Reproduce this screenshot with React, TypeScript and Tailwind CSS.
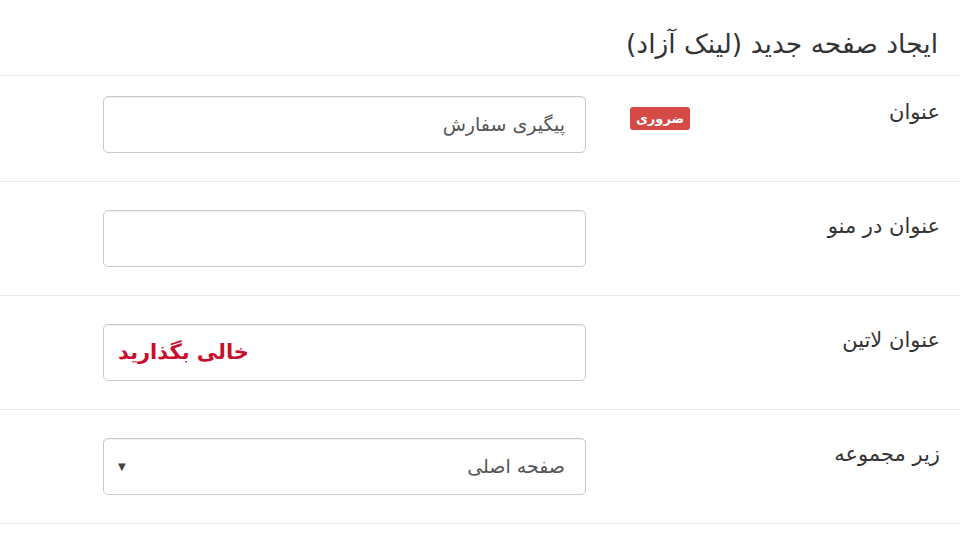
import React from 'react';

const font = { fontFamily: '"DejaVu Sans", "Noto Sans", sans-serif' };

type Row = {
  label: string;
  required?: boolean;
  kind: 'text' | 'select';
  value?: string;
  note?: string;
};

const rows: Row[] = [
  { label: 'عنوان', required: true, kind: 'text', value: 'پیگیری سفارش' },
  { label: 'عنوان در منو', kind: 'text' },
  { label: 'عنوان لاتین', kind: 'text', note: 'خالی بگذارید' },
  { label: 'زیر مجموعه', kind: 'select', value: 'صفحه اصلی' },
];

const FormRow: React.FC<{ row: Row; first: boolean }> = ({ row, first }) => {
  return (
    <div
      className={`flex flex-row border-b border-[#e8e8e8] pr-[20px] pl-[103px] pb-[28px] ${
        first ? 'pt-[20px]' : 'pt-[28px]'
      }`}
    >
      <div className="w-[310px] flex flex-row justify-between items-start">
        <span className="text-[21px] leading-[32px] text-[#333]">{row.label}</span>
        {row.required && (
          <span className="mt-[11px] h-[23px] w-[60px] rounded-[3px] bg-[#d54a45] text-white text-[13px] font-bold leading-[23px] text-center">
            ضروری
          </span>
        )}
      </div>
      <div className="w-[44px]" />
      <div className="w-[483px] h-[57px] rounded-[5px] border border-[#c9c9c9] bg-white flex flex-row items-center pr-[20px] pl-[14px] shadow-[inset_0_1px_1px_rgba(0,0,0,0.06)]">
        <span className="flex-1 text-[19px] text-[#555] leading-none">{row.value}</span>
        {row.note && (
          <span className="text-[21px] font-bold text-[#c8102e] leading-none">{row.note}</span>
        )}
        {row.kind === 'select' && <span className="text-[10px] text-[#444]">▼</span>}
      </div>
    </div>
  );
};

const App: React.FC = () => {
  return (
    <div dir="rtl" className="w-[960px] h-[540px] bg-white overflow-hidden" style={font}>
      <div className="h-[76px] border-b border-[#e8e8e8] pr-[22px] pt-[25px]">
        <h1 className="text-[26.5px] leading-[38px] text-[#333]">ایجاد صفحه جدید (لینک آزاد)</h1>
      </div>
      {rows.map((row, i) => (
        <FormRow key={row.label} row={row} first={i === 0} />
      ))}
    </div>
  );
};

export default App;
